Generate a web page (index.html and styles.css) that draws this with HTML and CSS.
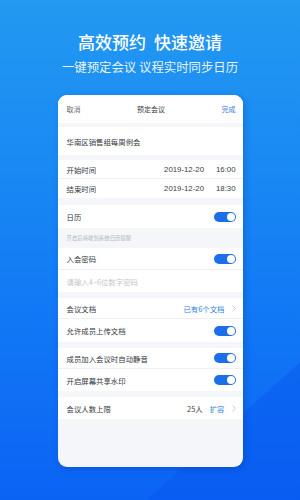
FILE: index.html
```html
<!DOCTYPE html>
<html lang="zh">
<head>
<meta charset="utf-8">
<link rel="stylesheet" href="styles.css">
</head>
<body>
<div class="screen">
  <h1 class="title">高效预约 快速邀请</h1>
  <p class="subtitle">一键预定会议 议程实时同步日历</p>
  <div class="card">
    <div class="head">
      <span class="cancel">取消</span>
      <span class="head-title">预定会议</span>
      <span class="done">完成</span>
    </div>
    <div class="gap g4"></div>
    <div class="row tall"><span>华南区销售组每周例会</span></div>
    <div class="gap g5"></div>
    <div class="row line"><span>开始时间</span><span class="vals nums"><span class="date">2019-12-20</span><span>16:00</span></span></div>
    <div class="row"><span>结束时间</span><span class="vals nums"><span class="date">2019-12-20</span><span>18:30</span></span></div>
    <div class="gap g7"></div>
    <div class="row r23"><span>日历</span><span class="toggle"></span></div>
    <div class="hint">开启后将收到系统日历提醒</div>
    <div class="row r22 line"><span>入会密码</span><span class="toggle"></span></div>
    <div class="row r22"><span class="placeholder">请输入4~6位数字密码</span></div>
    <div class="gap g6"></div>
    <div class="row r21 line"><span>会议文档</span><span class="vals"><span class="blue">已有6个文档</span><svg class="chev" viewBox="0 0 4 7"><path d="M0.6 0.6 L3.3 3.5 L0.6 6.4" fill="none" stroke="#c4c8ce" stroke-width="0.9"/></svg></span></div>
    <div class="row r23"><span>允许成员上传文档</span><span class="toggle"></span></div>
    <div class="gap g6"></div>
    <div class="row r21 line"><span>成员加入会议时自动静音</span><span class="toggle"></span></div>
    <div class="row r22"><span>开启屏幕共享水印</span><span class="toggle"></span></div>
    <div class="gap g6"></div>
    <div class="row r22"><span>会议人数上限</span><span class="vals"><span class="num">25人</span><span class="blue">扩容</span><svg class="chev" viewBox="0 0 4 7"><path d="M0.6 0.6 L3.3 3.5 L0.6 6.4" fill="none" stroke="#c4c8ce" stroke-width="0.9"/></svg></span></div>
  </div>
</div>
</body>
</html>
```

FILE: styles.css
```css
* { box-sizing: border-box; }
html, body { margin: 0; padding: 0; }
body {
  width: 300px;
  height: 500px;
  overflow: hidden;
  font-family: "Noto Sans CJK SC", "Noto Sans", sans-serif;
}
.screen {
  width: 300px;
  height: 500px;
  display: flex;
  flex-direction: column;
  align-items: center;
  background:
    linear-gradient(138deg, rgba(0,0,0,0) 0%, rgba(0,0,0,0) 82%, rgba(6,80,235,0.35) 82.2%, rgba(6,80,235,0.35) 100%),
    linear-gradient(180deg, #2399f1 0%, #1a8bf3 30%, #127af5 60%, #0b63f4 100%);
}
.title {
  margin: 30px 0 0;
  height: 24px;
  line-height: 24px;
  font-size: 17px;
  font-weight: 500;
  color: #ffffff;
  word-spacing: 4px;
}
.subtitle {
  margin: 4px 0 0;
  height: 18px;
  line-height: 18px;
  font-size: 12.4px;
  color: rgba(255,255,255,0.92);
}
.card {
  margin-top: 19px;
  width: 185px;
  height: 372px;
  border-radius: 9px;
  overflow: hidden;
  background: #f4f6f9;
  box-shadow: 2px 2px 6px rgba(0, 40, 140, 0.25);
  display: flex;
  flex-direction: column;
  font-size: 7.4px;
  color: #333840;
}
.head {
  height: 28px;
  background: #fff;
  display: flex;
  align-items: center;
  justify-content: space-between;
  padding: 0 7px 0 9px;
  font-size: 7px;
}
.cancel { color: #6b6f76; }
.head-title { color: #33373d; }
.done { color: #2f7fe0; }
.gap { flex: none; }
.g4 { height: 4px; }
.g5 { height: 5px; }
.g6 { height: 6px; }
.g7 { height: 7px; }
.row {
  flex: none;
  height: 19px;
  background: #fff;
  display: flex;
  align-items: center;
  justify-content: space-between;
  padding: 0 7px 0 9px;
}
.row.tall { height: 28px; }
.row.r21 { height: 21px; }
.row.r22 { height: 22px; }
.row.r23 { height: 23px; }
.row.line { border-bottom: 1px solid #eef0f3; }
.vals { display: flex; align-items: center; }
.nums { font-family: "Liberation Sans", sans-serif; font-size: 7.8px; color: #3a3e45; }
.date { margin-right: 12px; }
.num { margin-right: 7px; color: #444; }
.blue { color: #2f7fe0; }
.chev { width: 4px; height: 7px; margin-left: 7px; }
.placeholder { color: #c3c6cc; }
.hint {
  flex: none;
  height: 20px;
  line-height: 20px;
  padding-left: 9px;
  font-size: 5.4px;
  color: #b3b7bd;
  background: #f4f6f9;
}
.toggle {
  width: 22px;
  height: 10px;
  border-radius: 5px;
  background: #1c6fe8;
  display: flex;
  justify-content: flex-end;
  align-items: center;
  padding-right: 1px;
}
.toggle::after {
  content: "";
  width: 8px;
  height: 8px;
  border-radius: 50%;
  background: #fff;
}
```
